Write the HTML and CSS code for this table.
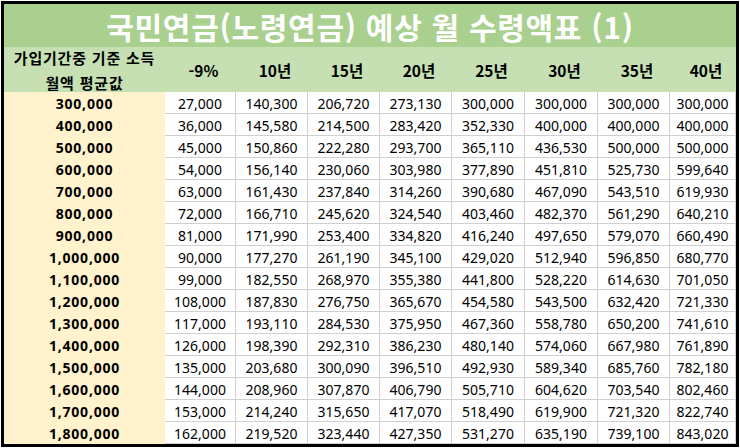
FILE: index.html
```html
<!DOCTYPE html>
<html lang="ko">
<head>
<meta charset="utf-8">
<link rel="stylesheet" href="styles.css">
</head>
<body>
<div class="sheet">
  <div class="tbl">
    <div class="title">국민연금(노령연금) 예상 월 수령액표 (1)</div>
    <div class="hd hd-first">가입기간중 기준 소득<br>월액 평균값</div>
    <div class="hd">-9%</div>
    <div class="hd">10년</div>
    <div class="hd">15년</div>
    <div class="hd">20년</div>
    <div class="hd">25년</div>
    <div class="hd">30년</div>
    <div class="hd">35년</div>
    <div class="hd">40년</div>

    <div class="k">300,000</div><div class="v">27,000</div><div class="v">140,300</div><div class="v">206,720</div><div class="v">273,130</div><div class="v">300,000</div><div class="v">300,000</div><div class="v">300,000</div><div class="v">300,000</div>
    <div class="k">400,000</div><div class="v">36,000</div><div class="v">145,580</div><div class="v">214,500</div><div class="v">283,420</div><div class="v">352,330</div><div class="v">400,000</div><div class="v">400,000</div><div class="v">400,000</div>
    <div class="k">500,000</div><div class="v">45,000</div><div class="v">150,860</div><div class="v">222,280</div><div class="v">293,700</div><div class="v">365,110</div><div class="v">436,530</div><div class="v">500,000</div><div class="v">500,000</div>
    <div class="k">600,000</div><div class="v">54,000</div><div class="v">156,140</div><div class="v">230,060</div><div class="v">303,980</div><div class="v">377,890</div><div class="v">451,810</div><div class="v">525,730</div><div class="v">599,640</div>
    <div class="k">700,000</div><div class="v">63,000</div><div class="v">161,430</div><div class="v">237,840</div><div class="v">314,260</div><div class="v">390,680</div><div class="v">467,090</div><div class="v">543,510</div><div class="v">619,930</div>
    <div class="k">800,000</div><div class="v">72,000</div><div class="v">166,710</div><div class="v">245,620</div><div class="v">324,540</div><div class="v">403,460</div><div class="v">482,370</div><div class="v">561,290</div><div class="v">640,210</div>
    <div class="k">900,000</div><div class="v">81,000</div><div class="v">171,990</div><div class="v">253,400</div><div class="v">334,820</div><div class="v">416,240</div><div class="v">497,650</div><div class="v">579,070</div><div class="v">660,490</div>
    <div class="k">1,000,000</div><div class="v">90,000</div><div class="v">177,270</div><div class="v">261,190</div><div class="v">345,100</div><div class="v">429,020</div><div class="v">512,940</div><div class="v">596,850</div><div class="v">680,770</div>
    <div class="k">1,100,000</div><div class="v">99,000</div><div class="v">182,550</div><div class="v">268,970</div><div class="v">355,380</div><div class="v">441,800</div><div class="v">528,220</div><div class="v">614,630</div><div class="v">701,050</div>
    <div class="k">1,200,000</div><div class="v">108,000</div><div class="v">187,830</div><div class="v">276,750</div><div class="v">365,670</div><div class="v">454,580</div><div class="v">543,500</div><div class="v">632,420</div><div class="v">721,330</div>
    <div class="k">1,300,000</div><div class="v">117,000</div><div class="v">193,110</div><div class="v">284,530</div><div class="v">375,950</div><div class="v">467,360</div><div class="v">558,780</div><div class="v">650,200</div><div class="v">741,610</div>
    <div class="k">1,400,000</div><div class="v">126,000</div><div class="v">198,390</div><div class="v">292,310</div><div class="v">386,230</div><div class="v">480,140</div><div class="v">574,060</div><div class="v">667,980</div><div class="v">761,890</div>
    <div class="k">1,500,000</div><div class="v">135,000</div><div class="v">203,680</div><div class="v">300,090</div><div class="v">396,510</div><div class="v">492,930</div><div class="v">589,340</div><div class="v">685,760</div><div class="v">782,180</div>
    <div class="k">1,600,000</div><div class="v">144,000</div><div class="v">208,960</div><div class="v">307,870</div><div class="v">406,790</div><div class="v">505,710</div><div class="v">604,620</div><div class="v">703,540</div><div class="v">802,460</div>
    <div class="k">1,700,000</div><div class="v">153,000</div><div class="v">214,240</div><div class="v">315,650</div><div class="v">417,070</div><div class="v">518,490</div><div class="v">619,900</div><div class="v">721,320</div><div class="v">822,740</div>
    <div class="k">1,800,000</div><div class="v">162,000</div><div class="v">219,520</div><div class="v">323,440</div><div class="v">427,350</div><div class="v">531,270</div><div class="v">635,190</div><div class="v">739,100</div><div class="v">843,020</div>
  </div>
</div>
</body>
</html>
```

FILE: styles.css
```css
html, body {
  margin: 0;
  padding: 0;
  background: #ffffff;
}

.sheet {
  width: 740px;
  height: 448px;
  padding: 1px 0 0 1px;
  box-sizing: border-box;
  overflow: hidden;
}

.tbl {
  width: 738px;
  box-sizing: border-box;
  border: 3px solid #000000;
  display: grid;
  grid-template-columns: 161px 71px 72px 72px 72px 73px 73px 72px 66px;
  grid-template-rows: 43px 45px repeat(16, 22px);
  font-family: "Noto Sans", "Noto Sans CJK KR", sans-serif;
  color: #000000;
}

.title {
  grid-column: 1 / -1;
  background: #a9d08e;
  color: #ffffff;
  font-family: "Noto Sans CJK KR", sans-serif;
  font-weight: 700;
  font-size: 30px;
  letter-spacing: 0.7px;
  display: flex;
  align-items: center;
  justify-content: center;
  line-height: 1;
  padding-top: 1px;
}

.hd {
  background: #c6e0b4;
  font-family: "Noto Sans CJK KR", sans-serif;
  font-weight: 700;
  font-size: 15.5px;
  display: flex;
  align-items: center;
  justify-content: center;
  padding-left: 6px;
}

.hd-first {
  font-size: 15px;
  letter-spacing: 0.8px;
  line-height: 25px;
  text-align: center;
  padding-left: 0;
  padding-top: 0;
}

.k {
  background: #fff2cc;
  font-weight: 700;
  font-size: 14px;
  letter-spacing: 0.8px;
  display: flex;
  align-items: center;
  justify-content: center;
}

.v {
  background: #ffffff;
  font-size: 14px;
  display: flex;
  align-items: center;
  justify-content: center;
  border-right: 1px solid #d0d0d0;
  border-bottom: 1px solid #d0d0d0;
  padding-top: 1px;
}
```
